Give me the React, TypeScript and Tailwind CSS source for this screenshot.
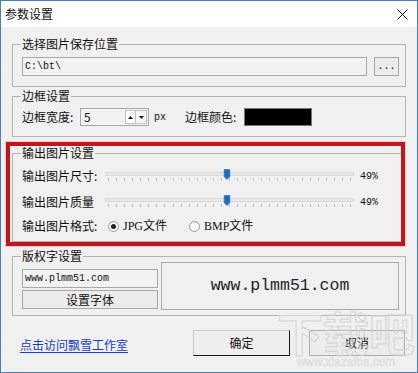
import type { ReactNode } from 'react'

const CJK = "font-['Noto_Sans_CJK_SC',sans-serif]"
const MONO = "font-['Liberation_Mono','Noto_Sans_CJK_SC',monospace]"

function Group({ label, className = '', children }: { label: string; className?: string; children: ReactNode }) {
  return (
    <fieldset className={`border border-[#b4b4b4] pl-[9px] pr-[6px] ${className}`}>
      <legend className="-ml-[1px] px-[1px] text-[12px] leading-[14px] text-[#111]">{label}</legend>
      {children}
    </fieldset>
  )
}

function Slider({ label, value }: { label: string; value: number }) {
  return (
    <div className="flex h-[20px] items-center">
      <span className="w-[83px] shrink-0 text-[12px] leading-[14px]">{label}</span>
      <div className="relative h-[20px] flex-1">
        <div className="absolute left-0 right-0 top-[6px] h-[4px] border border-[#d9d9d9] bg-[#e7e7e7]" />
        <div className="absolute left-[3px] right-[3px] top-[12px] flex justify-between">
          {Array.from({ length: 31 }).map((_, i) => (
            <div key={i} className="h-[3px] w-px bg-[#b8b8b8]" />
          ))}
        </div>
        <svg
          className="absolute top-[3px] -translate-x-1/2"
          style={{ left: `${value}%` }}
          width="7"
          height="11"
          viewBox="0 0 7 11"
        >
          <path d="M0.5 0.5 H6.5 V7.5 L3.5 10.5 L0.5 7.5 Z" fill="#1e6bb8" stroke="#3f8fd8" strokeWidth="1" />
        </svg>
      </div>
      <span className={`ml-[6px] w-[39px] shrink-0 text-[10px] ${MONO}`}>{value}%</span>
    </div>
  )
}

function Radio({ checked, label }: { checked: boolean; label: string }) {
  return (
    <div className="flex items-center">
      <span className="flex h-[11px] w-[11px] items-center justify-center rounded-full border border-[#9a9a9a] bg-[#f7f7f7]">
        {checked && <span className="h-[5px] w-[5px] rounded-full bg-[#222]" />}
      </span>
      <span className="ml-[4px] font-['Liberation_Serif','Noto_Sans_CJK_SC',serif] text-[12px] leading-[14px]">{label}</span>
    </div>
  )
}

export default function App() {
  return (
    <div className={`relative flex h-[373px] w-[418px] flex-col overflow-hidden border border-[#4a7fb5] bg-[#f0f0f0] text-[#111] ${CJK}`}>
      <div className="flex h-[26px] shrink-0 items-center justify-between bg-white pl-[4px] pr-[9px]">
        <span className="text-[12px] leading-[14px]">参数设置</span>
        <svg width="11" height="11" viewBox="0 0 11 11">
          <path d="M0.5 0.5 L10.5 10.5 M10.5 0.5 L0.5 10.5" stroke="#111" strokeWidth="1" />
        </svg>
      </div>

      <div className="flex flex-1 flex-col px-[11px] pt-[10px]">
        <Group label="选择图片保存位置" className="pb-[10px]">
          <div className="flex pt-[6px]">
            <div className={`flex h-[19px] flex-1 items-center border border-[#a8a8a8] bg-[#f2f2f2] pl-[2px] text-[10px] ${MONO}`}>
              C:\bt\
            </div>
            <div className={`ml-[7px] flex h-[19px] w-[25px] items-center justify-center border border-[#a8a8a8] bg-[#ececec] text-[10px] ${MONO}`}>
              ...
            </div>
          </div>
        </Group>

        <Group label="边框设置" className="mt-[2px] pb-[10px]">
          <div className="flex h-[18px] items-center pt-[0px] mt-[5px]">
            <span className="w-[58px] shrink-0 text-[12px] leading-[14px]">边框宽度:</span>
            <div className="flex h-[18px] w-[69px] items-center justify-between border border-[#a8a8a8] bg-[#f2f2f2] pl-[3px] pr-[1px]">
              <span className="text-[12px] leading-[14px]">5</span>
              <div className="flex h-[14px]">
                <div className="flex w-[11px] items-center justify-center border border-[#c0c0c0] bg-white">
                  <svg width="5" height="3" viewBox="0 0 5 3"><path d="M0 3 L2.5 0 L5 3 Z" fill="#111" /></svg>
                </div>
                <div className="flex w-[11px] items-center justify-center border border-l-0 border-[#c0c0c0] bg-[#f4f4f4]">
                  <svg width="5" height="3" viewBox="0 0 5 3"><path d="M0 0 L5 0 L2.5 3 Z" fill="#111" /></svg>
                </div>
              </div>
            </div>
            <span className={`ml-[5px] w-[31px] shrink-0 text-[10px] ${MONO}`}>px</span>
            <span className="w-[59px] shrink-0 text-[12px] leading-[14px]">边框颜色:</span>
            <div className="h-[18px] w-[68px] border border-[#777] bg-black" />
          </div>
        </Group>

        <Group label="输出图片设置" className="mt-[9px] pb-[5px]">
          <div className="flex flex-col pt-[6px]">
            <Slider label="输出图片尺寸:" value={49} />
            <div className="mt-[6px]">
              <Slider label="输出图片质量" value={49} />
            </div>
            <div className="mt-[4px] flex h-[20px] items-center">
              <span className="w-[86px] shrink-0 text-[12px] leading-[14px]">输出图片格式:</span>
              <Radio checked label="JPG文件" />
              <div className="ml-[22px]">
                <Radio checked={false} label="BMP文件" />
              </div>
            </div>
          </div>
        </Group>

        <Group label="版权字设置" className="mt-[7px] pb-[5px] pr-[2px]">
          <div className="flex">
            <div className="mt-[6px] flex w-[136px] shrink-0 flex-col gap-[2px]">
              <div className={`flex h-[19px] items-center border border-[#a8a8a8] bg-[#f2f2f2] pl-[2px] text-[10px] ${MONO}`}>
                www.plmm51.com
              </div>
              <div className="flex h-[19px] items-center justify-center border border-[#a8a8a8] bg-[#ececec] text-[12px] leading-[14px]">
                设置字体
              </div>
            </div>
            <div className={`-mt-[1px] ml-[3px] flex h-[48px] flex-1 items-center justify-center border border-[#a8a8a8] text-[16.5px] text-[#222] ${MONO}`}>
              www.plmm51.com
            </div>
          </div>
        </Group>

        <div className="mt-[14px] flex items-center">
          <span className="ml-[8px] mt-[3px] text-[12px] leading-[14px] text-[#1a3cc0] underline underline-offset-2">点击访问飘雪工作室</span>
          <div className="ml-auto mr-[1px] flex gap-[19px]">
            <div className="flex h-[26px] w-[97px] items-center justify-center border border-[#c8c8c8] border-b-[#1a1a1a] border-r-[#1a1a1a] bg-[#eeeeee] text-[12px] leading-[14px]">
              确定
            </div>
            <div className="flex h-[26px] w-[96px] items-center justify-center border border-[#adadad] bg-[#ececec] text-[12px] leading-[14px]">
              取消
            </div>
          </div>
        </div>
      </div>

      <div className="pointer-events-none absolute left-[5px] top-[141px] h-[104px] w-[399px] border-[4px] border-[#c3161c] shadow-[0_0_0_1px_#f3c9cb]" />

      <div className="pointer-events-none absolute bottom-[4px] right-[2px] flex flex-col items-center text-transparent">
        <span className="text-[46px] font-bold leading-[50px] [-webkit-text-stroke:1px_#d4d4d4]">下载吧</span>
        <span className="font-['Liberation_Sans',sans-serif] text-[12px] leading-[12px] [-webkit-text-stroke:0.5px_#d8d8d8]">www.xiazaiba.com</span>
      </div>
    </div>
  )
}
